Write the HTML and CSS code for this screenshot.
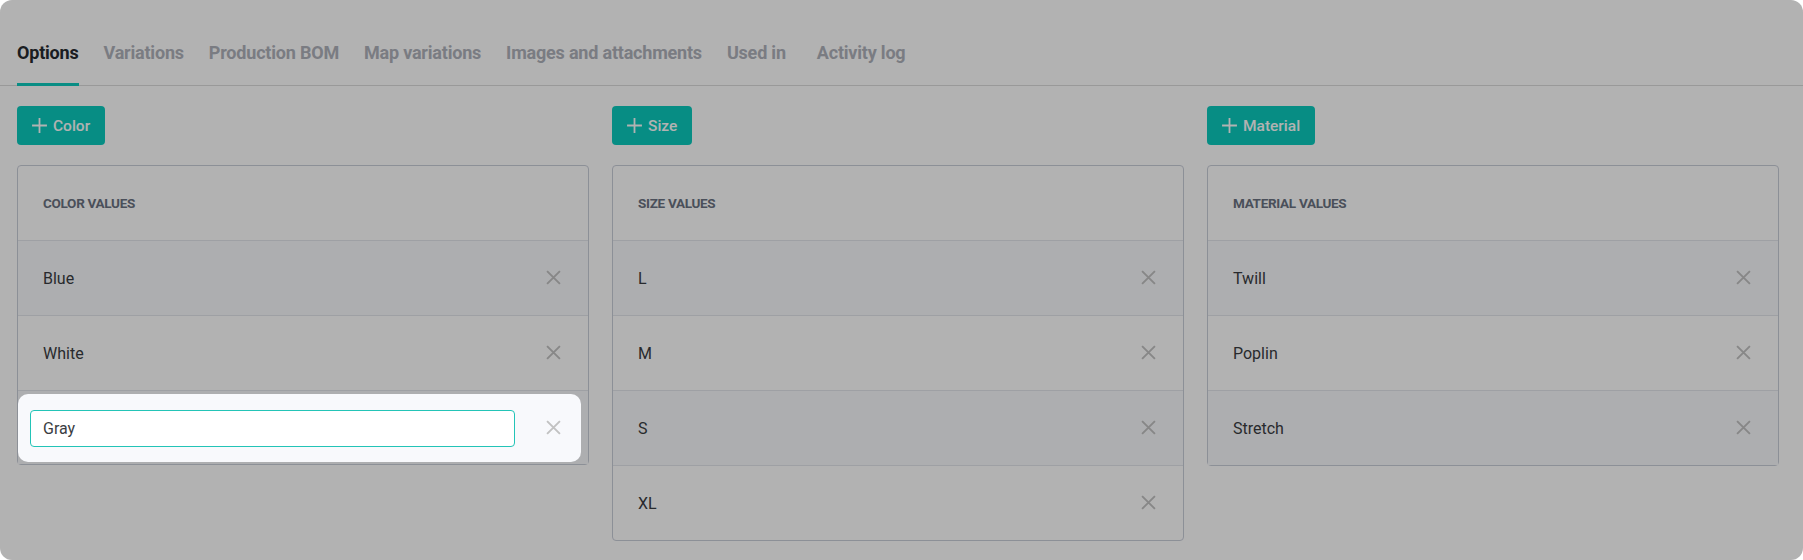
FILE: index.html
```html
<!doctype html>
<html lang="en">
    <head>
        <meta charset="utf-8">
        <title>Product options</title>
        <meta name="viewport" content="width=device-width, initial-scale=1">
        <link rel="stylesheet" href="styles.css">
    </head>
    <body>
        <div class="app">
            <nav class="tabs">
                <a class="tab active">Options</a>
                <a class="tab">Variations</a>
                <a class="tab">Production BOM</a>
                <a class="tab">Map variations</a>
                <a class="tab">Images and attachments</a>
                <a class="tab">Used in</a>
                <a class="tab log">Activity log</a>
            </nav>

            <div class="options">
                <section class="option">
                    <button class="add-btn">
                        <svg viewBox="0 0 16 16"><path d="M8 1v14M1 8h14"/></svg>
                        Color
                    </button>
                    <div class="values">
                        <div class="values-head">Color values</div>
                        <div class="value-row">
                            <span>Blue</span>
                            <button class="remove"><svg viewBox="0 0 14 14"><path d="M1 1l12 12M13 1L1 13"/></svg></button>
                        </div>
                        <div class="value-row">
                            <span>White</span>
                            <button class="remove"><svg viewBox="0 0 14 14"><path d="M1 1l12 12M13 1L1 13"/></svg></button>
                        </div>
                        <div class="value-row editing">
                            <!-- guided tour spotlight -->
                            <div class="spotlight">
                                <input class="value-input" type="text" value="Gray">
                                <button class="remove"><svg viewBox="0 0 14 14"><path d="M1 1l12 12M13 1L1 13"/></svg></button>
                            </div>
                        </div>
                    </div>
                </section>

                <section class="option">
                    <button class="add-btn">
                        <svg viewBox="0 0 16 16"><path d="M8 1v14M1 8h14"/></svg>
                        Size
                    </button>
                    <div class="values">
                        <div class="values-head">Size values</div>
                        <div class="value-row">
                            <span>L</span>
                            <button class="remove"><svg viewBox="0 0 14 14"><path d="M1 1l12 12M13 1L1 13"/></svg></button>
                        </div>
                        <div class="value-row">
                            <span>M</span>
                            <button class="remove"><svg viewBox="0 0 14 14"><path d="M1 1l12 12M13 1L1 13"/></svg></button>
                        </div>
                        <div class="value-row">
                            <span>S</span>
                            <button class="remove"><svg viewBox="0 0 14 14"><path d="M1 1l12 12M13 1L1 13"/></svg></button>
                        </div>
                        <div class="value-row">
                            <span>XL</span>
                            <button class="remove"><svg viewBox="0 0 14 14"><path d="M1 1l12 12M13 1L1 13"/></svg></button>
                        </div>
                    </div>
                </section>

                <section class="option">
                    <button class="add-btn">
                        <svg viewBox="0 0 16 16"><path d="M8 1v14M1 8h14"/></svg>
                        Material
                    </button>
                    <div class="values">
                        <div class="values-head">Material values</div>
                        <div class="value-row">
                            <span>Twill</span>
                            <button class="remove"><svg viewBox="0 0 14 14"><path d="M1 1l12 12M13 1L1 13"/></svg></button>
                        </div>
                        <div class="value-row">
                            <span>Poplin</span>
                            <button class="remove"><svg viewBox="0 0 14 14"><path d="M1 1l12 12M13 1L1 13"/></svg></button>
                        </div>
                        <div class="value-row">
                            <span>Stretch</span>
                            <button class="remove"><svg viewBox="0 0 14 14"><path d="M1 1l12 12M13 1L1 13"/></svg></button>
                        </div>
                    </div>
                </section>
            </div>
        </div>
    </body>
</html>
```

FILE: styles.css
```css
body {
    margin: 0;
    background-color: #fff;
    font-family: Roboto, "Liberation Sans", sans-serif;
    color: #3a3d42;
}

.app {
    box-sizing: border-box;
    height: 560px;
    background-color: #fff;
    border-radius: 12px;
    overflow: hidden;
}

.tabs {
    display: flex;
    gap: 25px;
    padding: 42px 17px 0;
    border-bottom: 1px solid #dcdcdc;
}

.tab {
    font-size: 18px;
    line-height: 21px;
    font-weight: 700;
    color: #afb2bb;
    padding-bottom: 20px;
    border-bottom: 3px solid transparent;
    margin-bottom: -1px;
    letter-spacing: -0.2px;
}

.tab.active {
    color: #272a30;
    border-bottom-color: #0dcabd;
}

.tab.log {
    margin-left: 6px;
}

.options {
    display: grid;
    grid-template-columns: repeat(3, 572px);
    gap: 23px;
    padding: 20px 17px 0;
}

.add-btn {
    display: inline-flex;
    align-items: center;
    gap: 5px;
    height: 39px;
    padding: 0 15px 0 14px;
    border: 0;
    border-radius: 4px;
    background-color: #0bcbbe;
    color: #fff;
    font-family: inherit;
    font-size: 15.5px;
    font-weight: 500;
}

.add-btn svg {
    width: 17px;
    height: 17px;
    fill: none;
    stroke: #fff;
    stroke-width: 1.7;
}

.values {
    margin-top: 20px;
    border: 1px solid #c9ced9;
    border-radius: 4px;
}

.values-head {
    height: 74px;
    display: flex;
    align-items: center;
    padding: 0 25px;
    font-size: 13.5px;
    font-weight: 700;
    text-transform: uppercase;
    letter-spacing: -0.3px;
    color: #6a7281;
}

.value-row {
    display: flex;
    align-items: center;
    justify-content: space-between;
    height: 74px;
    padding: 0 27px 0 25px;
    border-top: 1px solid #e3e6eb;
    font-size: 16px;
}

.value-row:nth-child(even) {
    background-color: #f8f9fc;
}

.remove {
    border: 0;
    padding: 0;
    background: none;
    width: 16px;
    height: 16px;
}

.remove svg {
    width: 15px;
    height: 15px;
    fill: none;
    stroke: #c2c2c2;
    stroke-width: 1.8;
}

.value-row.editing {
    padding: 3px 7px 2px 0;
    box-sizing: border-box;
}

.spotlight {
    position: relative;
    z-index: 5;
    flex: 1;
    height: 100%;
    display: flex;
    align-items: center;
    justify-content: space-between;
    padding: 0 20px 0 12px;
    background-color: #f8f9fc;
    border-radius: 10px;
    box-shadow: 0 0 0 3000px rgba(0, 0, 0, 0.3);
}

.value-input {
    box-sizing: border-box;
    width: 485px;
    height: 37px;
    padding: 0 12px;
    border: 1px solid #23c4b7;
    border-radius: 4px;
    background-color: #fff;
    font-family: inherit;
    font-size: 16px;
    color: #3a3d42;
    outline: none;
}
```
